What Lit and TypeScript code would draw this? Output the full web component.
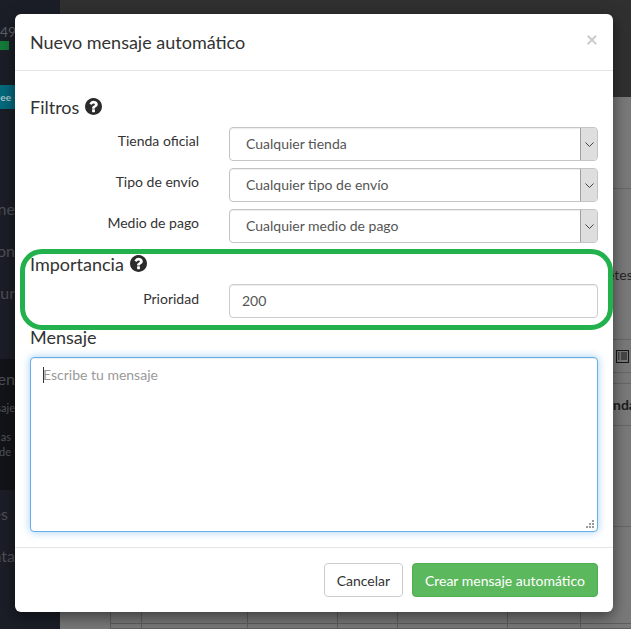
import { LitElement, html, css, svg } from "lit";
import { customElement } from "lit/decorators.js";

const help = svg`<path fill="#2b2b2b" d="M1024 1376v-192q0-14-9-23t-23-9h-192q-14 0-23 9t-9 23v192q0 14 9 23t23 9h192q14 0 23-9t9-23zm256-672q0-88-55.5-163t-138.5-116-170-41q-243 0-371 213-15 24 8 42l132 100q7 6 19 6 16 0 25-12 53-68 86-92 34-24 86-24 48 0 85.5 26t37.5 59q0 38-20 61t-68 45q-63 28-115.5 86.5t-52.5 125.5v36q0 14 9 23t23 9h192q14 0 23-9t9-23q0-19 21.5-49.5t54.5-49.5q32-18 49-28.5t46-35 44.5-48 28-60.5 12.5-81zm384 192q0 209-103 385.5t-279.5 279.5-385.5 103-385.5-103-279.5-279.5-103-385.5 103-385.5 279.5-279.5 385.5-103 385.5 103 279.5 279.5 103 385.5z"/>`;

@customElement("app-root")
export class AppRoot extends LitElement {
  static styles = css`
    :host { display: block; position: relative; width: 631px; height: 629px; overflow: hidden; font-family: Lato, sans-serif; font-size: 14px; color: #333; }
    * { box-sizing: border-box; }
    .page { display: grid; grid-template-columns: 60px 1fr; height: 629px; }
    .side { background: #1b1e27; color: #54565c; overflow: hidden; display: flex; flex-direction: column; }
    .side > div { white-space: nowrap; }
    .s1 { padding-top: 23px; height: 41px; width: 15px; overflow: hidden; font-size: 14px; line-height: 18px; color: #5e6065; }
    .bar { height: 9px; width: 9px; background: #157a3a; }
    .teal { margin-top: 35px; height: 24px; width: 15px; padding-right: 4px; background: #046a7d; color: #a9c8cf; font-size: 10px; font-weight: 700; line-height: 24px; text-align: right; overflow: hidden; }
    .row { font-size: 16px; line-height: 20px; width: 15px; direction: rtl; overflow: hidden; color: #4e5056; }
    .row.es { width: 8px; }
    .r1 { margin-top: 90px; }
    .r2 { margin-top: 22px; }
    .r3 { margin-top: 14px; }
    .dark { margin-top: 56px; height: 131px; background: #121419; padding-top: 10px; }
    .sm { font-size: 11px; line-height: 15px; width: 15px; overflow: hidden; direction: rtl; color: #54565c; }
    .sm.a { margin-top: 11px; }
    .sm.b { margin-top: 14px; }
    .sm.n { width: 11px; }
    .main { display: flex; flex-direction: column; background: #777; }
    .top { height: 97px; background: #303030; }
    .content { flex: 1; display: flex; flex-direction: column; background: #797979; color: #262626; white-space: nowrap; overflow: hidden; }
    .band { border-bottom: 1px solid #666; padding-left: 553px; }
    .b1 { height: 92px; }
    .b2 { height: 151px; padding-top: 76px; padding-left: 547px; line-height: 20px; }
    .b3 { height: 33px; display: flex; align-items: center; padding-left: 556px; }
    .b3 svg { width: 13px; height: 13px; display: block; }
    .b4 { height: 11px; }
    .b5 { height: 42px; padding-top: 11px; font-weight: 700; line-height: 20px; color: #1c1c1c; }
    .b6 { height: 101px; }
    .tbl { flex: 1; display: grid; grid-template-columns: 50px 31px 106px 90px 60px 110px 73px 1fr; grid-template-rows: 97px 1fr; }
    .cell { border-left: 1px solid #5e5e5e; border-bottom: 1px solid #5e5e5e; }
    .cell.first { border: 0; }
    .modal { position: absolute; left: 15px; top: 14px; width: 598px; height: 598px; background: #fff; border-radius: 6px; box-shadow: 0 5px 15px rgba(0,0,0,.5); display: flex; flex-direction: column; }
    .head { height: 57px; padding: 15px; border-bottom: 1px solid #e5e5e5; display: flex; justify-content: space-between; }
    .title { font-size: 18px; line-height: 26px; font-weight: 400; margin: 0; color: #333; }
    .close { font-size: 21px; font-weight: 700; line-height: 21px; color: #000; opacity: .2; margin-top: -1px; }
    .body { flex: 1; padding: 26px 15px 15px; display: flex; flex-direction: column; }
    h4 { margin: 0; font-size: 18px; line-height: 20px; font-weight: 400; display: flex; align-items: center; gap: 6px; color: #333; height: 20px; }
    h4 svg { width: 17px; height: 17px; margin-top: -2px; display: block; }
    .filters { margin-top: 10px; }
    .field { display: grid; grid-template-columns: 169px 369px; column-gap: 30px; align-items: start; height: 34px; margin-bottom: 7px; }
    .field label { text-align: right; padding-top: 4px; line-height: 20px; font-size: 14px; color: #333; }
    .select { height: 34px; border: 1px solid #c4c4c4; border-radius: 4px; display: flex; box-shadow: inset 0 1px 1px rgba(0,0,0,.075); overflow: hidden; }
    .select select { flex: 1; appearance: none; border: 0; background: transparent; font: 14px Lato, sans-serif; color: #555; padding: 0 0 2px 16px; height: 32px; }
    .arrow { width: 17px; background: #dedede; border-left: 1px solid #a0a0a0; display: flex; align-items: center; justify-content: center; }
    .arrow svg { width: 9px; height: 5px; }
    input.num { height: 34px; width: 369px; border: 1px solid #ccc; border-radius: 4px; box-shadow: inset 0 1px 1px rgba(0,0,0,.075); font: 14px Lato, sans-serif; color: #555; padding: 5px 12px 7px; }
    .impfield label { padding-top: 5px; }
    .imp { margin-top: 4px; }
    .impfield { margin-top: 10px; margin-bottom: 0; }
    .msg { margin-top: 9px; }
    .ta { position: relative; margin-top: 10px; height: 175px; }
    textarea { display: block; width: 568px; height: 175px; border: 1px solid #66afe9; border-radius: 4px; box-shadow: inset 0 1px 1px rgba(0,0,0,.075), 0 0 8px rgba(102,175,233,.6); font: 14px Lato, sans-serif; color: #555; padding: 8px 12px 6px; outline: none; resize: none; }
    textarea::placeholder { color: #999; opacity: 1; }
    .caret { position: absolute; left: 13px; top: 10px; width: 1px; height: 16px; background: #333; }
    .grip { position: absolute; right: 3px; bottom: 3px; width: 9px; height: 9px; display: block; }
    .foot { height: 65px; border-top: 1px solid #e5e5e5; padding: 15px; display: flex; justify-content: flex-end; gap: 9px; }
    button { height: 34px; border-radius: 4px; border: 1px solid #ccc; background: #fff; font: 14px Lato, sans-serif; color: #333; padding: 6px 12px; }
    button.cancel { width: 79px; padding: 6px 0; }
    button.ok { background: #5cb85c; border-color: #4cae4c; color: #fff; }
    .mark { position: absolute; left: 20px; top: 249px; width: 593px; height: 81px; border: 5px solid #22b14c; border-radius: 22px; pointer-events: none; }
  `;

  render() {
    const cells = [0, 1, 2, 3, 4, 5, 6, 7];
    return html`
      <div class="page">
        <div class="side">
          <div class="s1">49</div>
          <div class="bar"></div>
          <div class="teal">ee</div>
          <div class="row r1">one</div>
          <div class="row r2">on</div>
          <div class="row r2">gur</div>
          <div class="dark">
            <div class="row">ren</div>
            <div class="sm a">saje</div>
            <div class="sm b n">as</div>
            <div class="sm n">de</div>
          </div>
          <div class="row r3 es">es</div>
          <div class="row r2">nta</div>
        </div>
        <div class="main">
          <div class="top"></div>
          <div class="content">
            <div class="band b1"></div>
            <div class="band b2">etes</div>
            <div class="band b3">
              <svg viewBox="0 0 13 13"><rect x=".5" y=".5" width="12" height="12" fill="none" stroke="#151515"/><path d="M2 3h1.5M5 3h6M2 5h1.5M5 5h6M2 7h1.5M5 7h6M2 9h1.5M5 9h6" stroke="#151515" stroke-width="1"/></svg>
            </div>
            <div class="band b4"></div>
            <div class="band b5">nda</div>
            <div class="band b6"></div>
            <div class="tbl">
              ${[...cells, ...cells].map((i) => html`<div class="cell ${i === 0 ? "first" : ""}"></div>`)}
            </div>
          </div>
        </div>
      </div>
      <div class="modal">
        <div class="head">
          <h3 class="title">Nuevo mensaje automático</h3>
          <span class="close">×</span>
        </div>
        <div class="body">
          <h4>Filtros <svg viewBox="128 128 1536 1536">${help}</svg></h4>
          <div class="filters">
            ${[
              ["Tienda oficial", "Cualquier tienda"],
              ["Tipo de envío", "Cualquier tipo de envío"],
              ["Medio de pago", "Cualquier medio de pago"],
            ].map(
              ([l, v]) => html`<div class="field">
                <label>${l}</label>
                <div class="select">
                  <select><option>${v}</option></select>
                  <div class="arrow"><svg viewBox="0 0 9 5"><path d="M.5.5 4.5 4.5 8.5.5" fill="none" stroke="#444" stroke-width="1"/></svg></div>
                </div>
              </div>`
            )}
          </div>
          <h4 class="imp">Importancia <svg viewBox="128 128 1536 1536">${help}</svg></h4>
          <div class="field impfield">
            <label>Prioridad</label>
            <input class="num" type="text" value="200" />
          </div>
          <h4 class="msg">Mensaje</h4>
          <div class="ta">
            <textarea placeholder="Escribe tu mensaje"></textarea>
            <span class="caret"></span>
            <svg class="grip" viewBox="0 0 9 9"><path fill="#9a9a9a" d="M6 0h2v2H6zM3 3h2v2H3zM6 3h2v2H6zM0 6h2v2H0zM3 6h2v2H3zM6 6h2v2H6z"/></svg>
          </div>
        </div>
        <div class="foot">
          <button class="cancel">Cancelar</button>
          <button class="ok">Crear mensaje automático</button>
        </div>
      </div>
      <div class="mark"></div>
    `;
  }
}
